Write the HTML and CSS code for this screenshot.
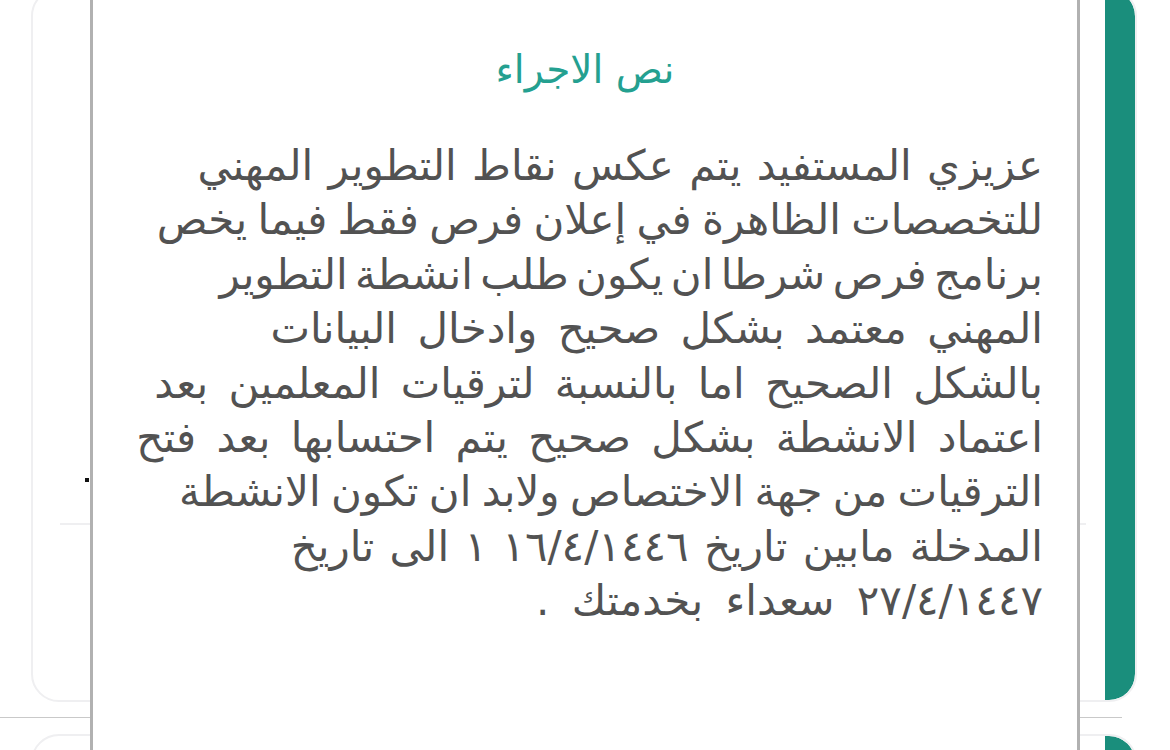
FILE: index.html
```html
<!DOCTYPE html>
<html lang="ar">
<head>
<meta charset="utf-8">
<link rel="stylesheet" href="styles.css">
</head>
<body>
<div class="list">
  <div class="card">
    <div class="card-body">
      <div class="dot-row"><span class="dot"></span></div>
      <div class="sep"></div>
    </div>
    <div class="strip"></div>
  </div>
  <div class="divider"></div>
  <div class="card">
    <div class="card-body"></div>
    <div class="strip"></div>
  </div>
</div>

<div class="modal" dir="rtl">
  <h2 class="title">نص الاجراء</h2>
  <div class="text">
    <div class="line">عزيزي المستفيد يتم عكس نقاط التطوير المهني</div>
    <div class="line tight">للتخصصات الظاهرة في إعلان فرص فقط فيما يخص</div>
    <div class="line tighter">برنامج فرص شرطا ان يكون طلب انشطة التطوير</div>
    <div class="line loose">المهني معتمد بشكل صحيح وادخال البيانات</div>
    <div class="line loose">بالشكل الصحيح اما بالنسبة لترقيات المعلمين بعد</div>
    <div class="line loose">اعتماد الانشطة بشكل صحيح يتم احتسابها بعد فتح</div>
    <div class="line tight">الترقيات من جهة الاختصاص ولابد ان تكون الانشطة</div>
    <div class="line">المدخلة مابين تاريخ ١٦/٤/١٤٤٦ ١ الى تاريخ</div>
    <div class="line looser">٢٧/٤/١٤٤٧ سعداء بخدمتك .</div>
  </div>
</div>
</body>
</html>
```
FILE: styles.css
```css
html, body {
  margin: 0;
  padding: 0;
  background: #ffffff;
  height: 750px;
  overflow: hidden;
  font-family: "DejaVu Sans", sans-serif;
}

.list {
  padding-left: 31px;
  width: 1106px;
}

.card {
  display: flex;
  height: 714px;
  box-sizing: border-box;
  border: 2px solid #efeff1;
  border-radius: 28px;
  overflow: hidden;
}

.list .card:first-child {
  margin-top: -12px;
}

.card-body {
  flex: 1;
  display: flex;
  flex-direction: column;
  padding: 488px 19px 0 27px;
}

.dot-row {
  height: 45px;
  padding-left: 25px;
}

.dot {
  display: block;
  width: 4px;
  height: 4px;
  background: #111;
}

.sep {
  height: 2px;
  background: #efeff1;
}

.strip {
  width: 30px;
  background: #1a8e7c;
  border-radius: 0 26px 26px 0;
}

.divider {
  height: 1px;
  background: #c9c9c9;
  margin: 15px 15px 16px -31px;
}

.modal {
  position: fixed;
  top: -10px;
  bottom: -10px;
  left: 90px;
  width: 990px;
  box-sizing: border-box;
  border: 3px solid #b1b1b1;
  background: #ffffff;
  padding: 52px 34px 0 34px;
}

.title {
  margin: 0;
  text-align: center;
  font-weight: normal;
  font-size: 39px;
  line-height: 50px;
  color: #24a090;
}

.text {
  margin-top: 44px;
  color: #525252;
  font-size: 42px;
  line-height: 54.4px;
  word-spacing: 2px;
}

.line {
  white-space: nowrap;
  text-align: right;
}

.line.tight {
  word-spacing: -3px;
}

.line.tighter {
  word-spacing: -6px;
}

.line.loose {
  word-spacing: 7px;
}

.line.looser {
  word-spacing: 9px;
}
```
